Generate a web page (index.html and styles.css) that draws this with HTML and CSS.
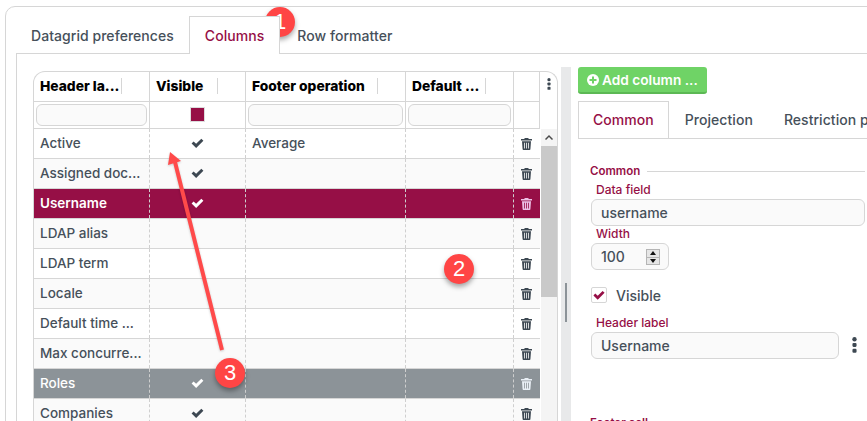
FILE: index.html
```html
<!DOCTYPE html>
<html lang="en">
<head>
<meta charset="utf-8">
<title>Columns</title>
<link rel="stylesheet" href="styles.css">
</head>
<body>
<svg class="defs" width="0" height="0" aria-hidden="true">
  <symbol id="check" viewBox="0 0 14 11"><path d="M.5 6l2.200-2.200L5.500 6.400 11.200.7 13.500 3l-8 8z"/></symbol>
  <symbol id="trash" viewBox="0 0 11 12"><path fill-rule="evenodd" d="M3.800 0h3.400l.6 1H11v1.500H0V1h3.200zM1 3.200h9l-.6 8c0 .4-.4.800-.8.800H2.400c-.4 0-.8-.4-.8-.8zM3 4.700v5.800h.8V4.700zM5.100 4.700v5.800h.8V4.700zM7.200 4.700v5.800H8V4.700z"/></symbol>
  <symbol id="kebab" viewBox="0 0 4 14"><circle cx="2" cy="2" r="1.900"/><rect x=".2" y="5.200" width="3.600" height="3.500" rx="1"/><rect x=".2" y="10.300" width="3.600" height="3.500" rx="1"/></symbol>
</svg>
<div class="page">
  <div class="card">
    <div class="tabs outer-tabs">
      <div class="tab">Datagrid preferences</div>
      <div class="tab active">Columns</div>
      <div class="tab">Row formatter</div>
    </div>
    <div class="panel">
      <div class="datagrid">
        <div class="dg-row dg-head">
          <div class="dg-h"><span>Header la...</span></div>
          <div class="dg-h"><span>Visible</span></div>
          <div class="dg-h"><span>Footer operation</span></div>
          <div class="dg-h"><span>Default ...</span></div>
          <div class="dg-h dg-last"></div>
          <div class="dg-menu"><svg class="kebab-sm"><use href="#kebab"/></svg></div>
        </div>
        <div class="dg-row dg-filter">
          <div class="dg-f"><div class="f-input"></div></div>
          <div class="dg-f dg-center"><div class="f-check"><div class="f-check-in"></div></div></div>
          <div class="dg-f"><div class="f-input"></div></div>
          <div class="dg-f"><div class="f-input"></div></div>
          <div class="dg-f dg-last"></div>
        </div>
        <div class="dg-body">
          <div class="dg-rows">
            <div class="dg-row r"><div class="c">Active</div><div class="c m"><svg class="ic-check"><use href="#check"/></svg></div><div class="c">Average</div><div class="c"></div><div class="c m"><svg class="ic-trash"><use href="#trash"/></svg></div></div>
            <div class="dg-row r alt"><div class="c">Assigned doc...</div><div class="c m"><svg class="ic-check"><use href="#check"/></svg></div><div class="c"></div><div class="c"></div><div class="c m"><svg class="ic-trash"><use href="#trash"/></svg></div></div>
            <div class="dg-row r sel"><div class="c">Username</div><div class="c m"><svg class="ic-check"><use href="#check"/></svg></div><div class="c"></div><div class="c"></div><div class="c m"><svg class="ic-trash"><use href="#trash"/></svg></div></div>
            <div class="dg-row r alt"><div class="c">LDAP alias</div><div class="c m"></div><div class="c"></div><div class="c"></div><div class="c m"><svg class="ic-trash"><use href="#trash"/></svg></div></div>
            <div class="dg-row r"><div class="c">LDAP term</div><div class="c m"></div><div class="c"></div><div class="c"></div><div class="c m"><svg class="ic-trash"><use href="#trash"/></svg></div></div>
            <div class="dg-row r alt"><div class="c">Locale</div><div class="c m"></div><div class="c"></div><div class="c"></div><div class="c m"><svg class="ic-trash"><use href="#trash"/></svg></div></div>
            <div class="dg-row r"><div class="c">Default time ...</div><div class="c m"></div><div class="c"></div><div class="c"></div><div class="c m"><svg class="ic-trash"><use href="#trash"/></svg></div></div>
            <div class="dg-row r alt"><div class="c">Max concurre...</div><div class="c m"></div><div class="c"></div><div class="c"></div><div class="c m"><svg class="ic-trash"><use href="#trash"/></svg></div></div>
            <div class="dg-row r grey"><div class="c">Roles</div><div class="c m"><svg class="ic-check"><use href="#check"/></svg></div><div class="c"></div><div class="c"></div><div class="c m"><svg class="ic-trash"><use href="#trash"/></svg></div></div>
            <div class="dg-row r alt"><div class="c">Companies</div><div class="c m"><svg class="ic-check"><use href="#check"/></svg></div><div class="c"></div><div class="c"></div><div class="c m"><svg class="ic-trash"><use href="#trash"/></svg></div></div>
          </div>
          <div class="scrollbar">
            <div class="sb-up"><svg class="sb-arrow" viewBox="0 0 8 5"><path d="M0 4l4-4 4 4-1 1-3-3-3 3z"/></svg></div>
            <div class="sb-thumb"></div>
          </div>
        </div>
      </div>
      <div class="splitter"><div class="split-handle"></div></div>
      <div class="side">
        <button class="add-btn"><svg class="plus" viewBox="0 0 12 12"><circle cx="6" cy="6" r="6" fill="#fff"/><path d="M5 2.500h2V5h2.500v2H7v2.500H5V7H2.500V5H5z" fill="#6fd366"/></svg>Add column ...</button>
        <div class="tabs side-tabs">
          <div class="tab active">Common</div>
          <div class="tab">Projection</div>
          <div class="tab">Restriction policy</div>
        </div>
        <div class="form">
          <div class="legend"><span>Common</span><i></i></div>
          <label class="lbl lbl-first">Data field</label>
          <div class="input full">username</div>
          <label class="lbl">Width</label>
          <div class="input spin">100<div class="spin-btns"><b class="up"></b><b class="down"></b></div></div>
          <div class="check-row">
            <div class="cb"><svg class="ic-cb"><use href="#check"/></svg></div>
            <span>Visible</span>
          </div>
          <label class="lbl lbl-h">Header label</label>
          <div class="input-row">
            <div class="input wide">Username</div>
            <svg class="kebab-lg"><use href="#kebab"/></svg>
          </div>
          <div class="legend legend-2"><span>Footer cell</span></div>
        </div>
      </div>
    </div>
  </div>
</div>
<svg class="arrow" viewBox="0 0 867 421" aria-hidden="true">
  <path d="M222 350 L175 162" stroke="#ff4a4a" stroke-width="4" fill="none"/>
  <path d="M170 152 L181 161 L168 165z" fill="#ff4a4a"/>
</svg>
<div class="badge b1">1</div>
<div class="badge b2">2</div>
<div class="badge b3">3</div>
</body>
</html>
```
FILE: styles.css
```css
* { box-sizing: border-box; }
html, body { margin: 0; padding: 0; }
body {
  width: 867px; height: 421px; overflow: hidden; position: relative; background: #fff;
  font-family: Inter, "Open Sans", "Liberation Sans", sans-serif;
  font-size: 13.5px; font-weight: 500; color: #46505a;
}
.defs { position: absolute; }
.page { padding: 6px 0 0 5px; height: 421px; overflow: hidden; }
.card {
  width: 900px; height: 500px; border: 1px solid #d6d6d6; border-radius: 10px 0 0 0;
  padding: 9px 0 0 10px;
}
.tabs { display: flex; white-space: nowrap; }
.tab { line-height: 36px; font-size: 14px; letter-spacing: .05px; }
.outer-tabs { height: 37px; }
.outer-tabs .tab { padding: 0 14px; height: 37px; line-height: 37px; border: 1px solid transparent; border-bottom: 0; }
.outer-tabs .tab:last-child { padding-left: 16px; }
.outer-tabs .tab.active { padding: 0 15px; }
.tabs .tab.active { color: #960f46; border: 1px solid #d6d6d6; border-bottom: 0; background: #fff; position: relative; z-index: 1; height: 38px; }
.panel { display: flex; align-items: flex-start; border-top: 1px solid #d6d6d6; border-left: 1px solid #d6d6d6; padding: 13px 0 0 16px; height: 460px; }

.datagrid { width: 525px; margin-top: 4px; border: 1px solid #d6d6d6; border-bottom: 0; border-radius: 12px 12px 0 0; height: 400px; flex: none; }
.dg-row { display: grid; grid-template-columns: 116px 96px 160px 108px 26px; }
.dg-head { height: 30px; grid-template-columns: 116px 96px 160px 108px 26px 17px; }
.dg-h { border-right: 1px solid #d6d6d6; border-bottom: 1px solid #d6d6d6; position: relative; padding-left: 6px; line-height: 29px; color: #000; font-weight: 800; font-size: 13.8px; white-space: nowrap; overflow: hidden; }
.dg-h:first-child { padding-left: 6px; }
.dg-h span::after { content: ""; position: absolute; right: 27px; top: 6px; height: 16px; border-right: 1px solid #d6d6d6; }
.dg-menu { display: flex; justify-content: center; padding-top: 6px; }
.kebab-sm { width: 4px; height: 12px; fill: #3d4852; }
.dg-filter { height: 27px; width: 506px; border-bottom: 1px solid #d6d6d6; }
.dg-f { border-right: 1px solid #d6d6d6; padding: 2px; height: 26px; }
.dg-center { display: flex; justify-content: center; }
.f-input { height: 22px; background: #fafafa; border: 1px solid #d6d6d6; border-radius: 6px; }
.f-check { width: 15px; height: 15px; margin-top: 3px; border: 1px solid #dcdcdc; background: #fff; }
.f-check-in { width: 13px; height: 13px; background: #960f46; }

.dg-body { display: flex; }
.dg-rows { width: 506px; flex: none; }
.r { height: 30px; border-bottom: 1px solid #d6d6d6; background: #fff; }
.r.alt { background: #fafafa; }
.r.sel { background: #960f46; color: #fff; font-weight: 600; }
.r.grey { background: #8c9398; color: #fff; }
.c { border-right: 1px dashed #cfcfcf; padding-left: 6px; line-height: 29px; white-space: nowrap; }
.c:last-child { border-right: 0; }
.c.m { padding: 0; display: flex; align-items: center; justify-content: center; }
.c.m:last-child { padding-right: 1px; }
.ic-check { width: 13px; height: 10px; fill: #3d4852; margin-top: -1px; }
.sel .ic-check, .grey .ic-check { fill: #fff; }
.ic-trash { width: 11px; height: 12px; fill: #3d4852; }
.sel .ic-trash { fill: #ecc0e4; }
.grey .ic-trash { fill: #e9eff5; }

.scrollbar { width: 16px; margin-left: 1px; background: #f4f4f4; height: 300px; }
.sb-up { height: 17px; display: flex; align-items: center; justify-content: center; }
.sb-arrow { width: 8px; height: 5px; fill: #4a4a4a; }
.sb-thumb { height: 151px; background: #c9c9c9; }

.splitter { width: 10px; margin-left: 3px; height: 360px; background: #e8e9ea; padding: 216px 0 0 4px; flex: none; }
.split-handle { width: 2px; height: 39px; background: #8c9398; }

.side { padding-left: 7px; width: 300px; flex: none; }
.add-btn {
  display: flex; align-items: center; gap: 3px; width: 129px; height: 27px; padding: 0 0 0 9px; margin: 0;
  background: #6fd366; border: 0; border-bottom: 2px solid #5cb854; border-radius: 3px;
  color: #fff; font: 600 13.7px Inter, "Liberation Sans", sans-serif; white-space: nowrap;
}
.plus { width: 12px; height: 12px; flex: none; }
.side-tabs { margin-top: 7px; height: 38px; border-bottom: 1px solid #d6d6d6; width: 296px; overflow: hidden; }
.side-tabs .tab { padding: 0 15px; border: 1px solid transparent; border-bottom: 0; }
.side-tabs .tab:nth-child(3) { padding-left: 14px; }
.side-tabs .tab.active { height: 38px; padding: 0 14px; }

.form { padding: 24px 0 0 12px; width: 287px; }
.legend { display: flex; align-items: center; gap: 7px; color: #960f46; font-size: 11.5px; font-weight: 600; line-height: 16px; }
.legend i { flex: 1; border-top: 1px solid #d6d6d6; }
.lbl { display: block; color: #960f46; font-size: 12px; line-height: 16px; padding-left: 6px; }
.lbl-first { margin-top: 3px; }
.input { height: 27px; border: 1px solid #d6d6d6; border-radius: 6px; background: #fafafa; padding-left: 9px; line-height: 26px; font-size: 14px; color: #46505a; margin-left: 1px; margin-top: 1px; }
.input.spin { width: 78px; position: relative; }
.spin-btns { position: absolute; right: 8px; top: 5px; width: 14px; height: 16px; border: 1px solid #b5b5b5; background: #e6e6e6; display: flex; flex-direction: column; }
.spin-btns b { flex: 1; display: flex; align-items: center; justify-content: center; }
.spin-btns b::before { content: ""; border-left: 3px solid transparent; border-right: 3px solid transparent; }
.spin-btns .up { border-bottom: 1px solid #b5b5b5; }
.spin-btns .up::before { border-bottom: 4px solid #111; }
.spin-btns .down::before { border-top: 4px solid #111; }
.check-row { display: flex; align-items: center; gap: 9px; margin: 17px 0 0 1px; font-size: 14px; height: 16px; }
.cb { width: 16px; height: 16px; border: 1px solid #d6d6d6; border-radius: 2px; background: #fff; display: flex; align-items: center; justify-content: center; }
.ic-cb { width: 12px; height: 10px; fill: #960f46; }
.lbl-h { margin-top: 12px; }
.input-row { display: flex; align-items: center; }
.input.wide { width: 248px; }
.kebab-lg { width: 5px; height: 16px; margin-left: 13px; fill: #3d4852; }
.legend-2 { margin-top: 56px; }

.arrow { position: absolute; left: 0; top: 0; width: 867px; height: 421px; pointer-events: none; filter: drop-shadow(0 1px 1px rgba(0,0,0,.2)); }
.badge {
  position: absolute; width: 30px; height: 30px; border-radius: 50%; background: #ff4545; color: #fff;
  font: 400 22px/30px "Liberation Sans", sans-serif; text-align: center; box-shadow: 0 3px 5px rgba(0,0,0,.35);
}
.b1 { left: 265px; top: 7px; }
.b2 { left: 444px; top: 254px; }
.b3 { left: 215px; top: 358px; }
```
